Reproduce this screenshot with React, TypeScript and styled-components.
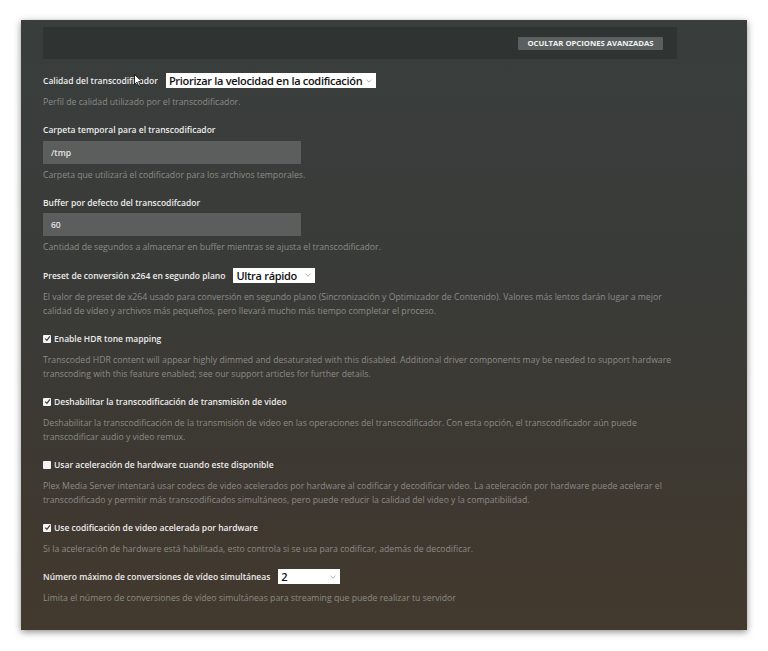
import styled, { createGlobalStyle } from "styled-components";

const GlobalStyle = createGlobalStyle`
  html, body {
    margin: 0;
    padding: 0;
    background: #ffffff;
  }
  body {
    font-family: "Open Sans", "Noto Sans", "Liberation Sans", sans-serif;
  }
`;

const Page = styled.div`
  width: 768px;
  height: 651px;
  padding-top: 20px;
  box-sizing: border-box;
`;

const Panel = styled.div`
  position: relative;
  width: 726px;
  height: 610px;
  margin-left: 21px;
  padding: 7px 0 0 22px;
  box-sizing: border-box;
  background: linear-gradient(180deg, #393e3d 0%, #3a3b38 45%, #3e3830 80%, #433a2e 100%);
  box-shadow: 0 2px 7px rgba(0, 0, 0, 0.45);
`;

const TopBar = styled.div`
  width: 634px;
  height: 32px;
  background: #2f3332;
  display: flex;
  align-items: center;
  justify-content: flex-end;
  padding-right: 14px;
  box-sizing: border-box;
  margin-bottom: 14px;
`;

const ToggleButton = styled.button`
  height: 13px;
  width: 145px;
  border: none;
  border-radius: 1px;
  background: #5a5f5f;
  color: #f2f2f2;
  font-family: "Open Sans", sans-serif;
  font-weight: 700;
  font-size: 7.7px;
  padding: 0;
  line-height: 13px;
`;

const Setting = styled.div`
  width: 634px;
  margin-bottom: 13px;
`;

const Row = styled.div`
  display: flex;
  align-items: center;
  height: 15px;
  gap: 8px;
`;

const Label = styled.label`
  display: flex;
  align-items: center;
  gap: 3px;
  height: 14px;
  color: #ececec;
  font-size: 8.5px;
  font-weight: 600;
  white-space: nowrap;
`;

const SelectBox = styled.div<{ $w: number }>`
  width: ${(p) => p.$w}px;
  height: 15px;
  background: #ffffff;
  display: flex;
  align-items: center;
  justify-content: space-between;
  padding: 0 4px 0 3px;
  box-sizing: border-box;
  color: #111111;
  font-size: 11px;
  font-weight: 600;
  letter-spacing: -0.3px;
  white-space: nowrap;
`;

const Chevron = () => (
  <svg width="6" height="4" viewBox="0 0 6 4">
    <path d="M0.5 0.8 L3 3.2 L5.5 0.8" fill="none" stroke="#9a9a9a" strokeWidth="0.8" />
  </svg>
);

const TextInput = styled.div`
  width: 258px;
  height: 23px;
  margin-top: 4px;
  background: #5c5e5d;
  color: #e4e4e4;
  font-size: 8.5px;
  font-weight: 600;
  display: flex;
  align-items: center;
  padding-left: 8px;
  box-sizing: border-box;
`;

const Description = styled.div<{ $gap?: number }>`
  margin-top: ${(p) => p.$gap ?? 7}px;
  color: #8b8b86;
  font-size: 8.7px;
  line-height: 14.5px;
  white-space: nowrap;
`;

const Box = styled.span`
  width: 8px;
  height: 8px;
  background: #f4f4f4;
  border-radius: 1px;
  display: inline-flex;
  align-items: center;
  justify-content: center;
`;

const Checkbox = ({ checked }: { checked: boolean }) => (
  <Box>
    {checked && (
      <svg width="7" height="7" viewBox="0 0 7 7">
        <path d="M1.2 3.6 L2.9 5.3 L5.9 1.4" fill="none" stroke="#3a3a3a" strokeWidth="1.2" />
      </svg>
    )}
  </Box>
);

const Cursor = styled.svg`
  position: absolute;
  left: 113px;
  top: 54px;
`;

const App = () => {
  return (
    <>
      <GlobalStyle />
      <Page>
        <Panel>
          <TopBar>
            <ToggleButton>OCULTAR OPCIONES AVANZADAS</ToggleButton>
          </TopBar>

          <Setting>
            <Row>
              <Label>Calidad del transcodificador</Label>
              <SelectBox $w={210}>
                Priorizar la velocidad en la codificación <Chevron />
              </SelectBox>
            </Row>
            <Description>Perfil de calidad utilizado por el transcodificador.</Description>
          </Setting>

          <Setting>
            <Label>Carpeta temporal para el transcodificador</Label>
            <TextInput>/tmp</TextInput>
            <Description $gap={4}>Carpeta que utilizará el codificador para los archivos temporales.</Description>
          </Setting>

          <Setting>
            <Label>Buffer por defecto del transcodifcador</Label>
            <TextInput>60</TextInput>
            <Description $gap={4}>
              Cantidad de segundos a almacenar en buffer mientras se ajusta el transcodificador.
            </Description>
          </Setting>

          <Setting>
            <Row>
              <Label>Preset de conversión x264 en segundo plano</Label>
              <SelectBox $w={82}>
                Ultra rápido <Chevron />
              </SelectBox>
            </Row>
            <Description>
              El valor de preset de x264 usado para conversión en segundo plano (Sincronización y Optimizador de
              Contenido). Valores más lentos darán lugar a mejor
              <br />
              calidad de vídeo y archivos más pequeños, pero llevará mucho más tiempo completar el proceso.
            </Description>
          </Setting>

          <Setting>
            <Label>
              <Checkbox checked />
              Enable HDR tone mapping
            </Label>
            <Description>
              Transcoded HDR content will appear highly dimmed and desaturated with this disabled. Additional driver
              components may be needed to support hardware
              <br />
              transcoding with this feature enabled; see our support articles for further details.
            </Description>
          </Setting>

          <Setting>
            <Label>
              <Checkbox checked />
              Deshabilitar la transcodificación de transmisión de video
            </Label>
            <Description>
              Deshabilitar la transcodificación de la transmisión de video en las operaciones del transcodificador. Con
              esta opción, el transcodificador aún puede
              <br />
              transcodificar audio y video remux.
            </Description>
          </Setting>

          <Setting>
            <Label>
              <Checkbox checked={false} />
              Usar aceleración de hardware cuando este disponible
            </Label>
            <Description>
              Plex Media Server intentará usar codecs de video acelerados por hardware al codificar y decodificar video.
              La aceleración por hardware puede acelerar el
              <br />
              transcodificado y permitir más transcodificados simultáneos, pero puede reducir la calidad del video y la
              compatibilidad.
            </Description>
          </Setting>

          <Setting>
            <Label>
              <Checkbox checked />
              Use codificación de video acelerada por hardware
            </Label>
            <Description>
              Si la aceleración de hardware está habilitada, esto controla si se usa para codificar, además de
              decodificar.
            </Description>
          </Setting>

          <Setting>
            <Row>
              <Label>Número máximo de conversiones de vídeo simultáneas</Label>
              <SelectBox $w={62}>
                2 <Chevron />
              </SelectBox>
            </Row>
            <Description>
              Limita el número de conversiones de vídeo simultáneas para streaming que puede realizar tu servidor
            </Description>
          </Setting>

          <Cursor width="9" height="13" viewBox="0 0 9 13">
            <path d="M0.5 0.5 L0.5 10.5 L3 8.2 L4.8 12.3 L6.3 11.6 L4.6 7.6 L8 7.6 Z" fill="#ffffff" stroke="#000000" strokeWidth="0.8" />
          </Cursor>
        </Panel>
      </Page>
    </>
  );
};

export default App;
